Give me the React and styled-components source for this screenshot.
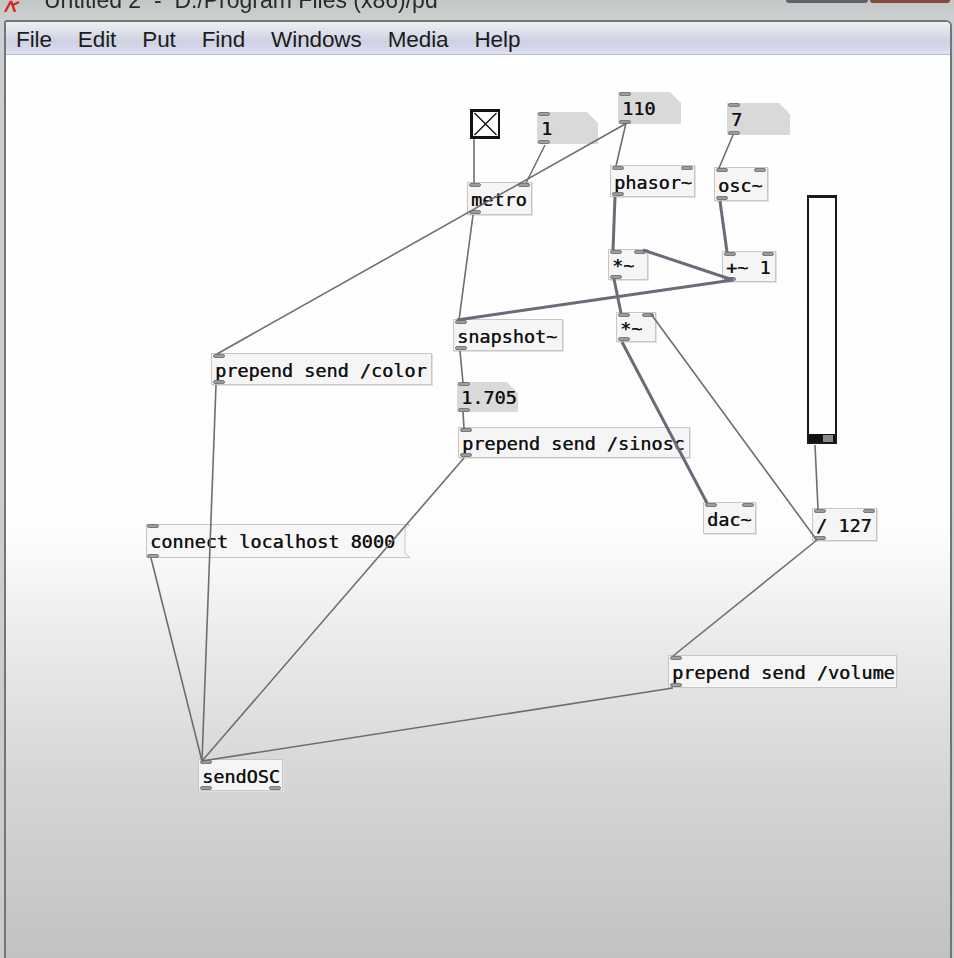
import React from "react";
import styled, { createGlobalStyle, css } from "styled-components";

const CX = 6;
const CY = 56;

const GlobalStyle = createGlobalStyle`
  html, body { margin: 0; padding: 0; background: #c8cbcc; }
  #root { width: 954px; height: 958px; }
`;

const Window = styled.div`
  width: 954px;
  height: 958px;
  background: linear-gradient(to bottom, #c3c6c7, #cdd0d1 20px, #c9cccd);
  display: flex;
  flex-direction: column;
  overflow: hidden;
  position: relative;
`;

const TitleBar = styled.div`
  height: 20px;
  display: flex;
  align-items: flex-start;
  gap: 22px;
  overflow: hidden;
  padding-left: 2px;
  flex: none;
`;

const TitleIcon = styled.svg`
  width: 20px;
  height: 12px;
  flex: none;
`;

const TitleText = styled.div`
  font-family: "Liberation Sans", Arial, sans-serif;
  font-size: 23px;
  line-height: 24px;
  margin-top: -12px;
  color: #2a2a2a;
  white-space: pre;
  filter: blur(0.4px);
`;

const WindowButtons = styled.div`
  position: absolute;
  top: 0;
  right: 4px;
  display: flex;
  gap: 2px;
`;

const WinBtn = styled.div`
  width: ${(p) => p.$w}px;
  height: 3px;
  border-radius: 0 0 4px 4px;
  background: ${(p) => p.$c};
`;

const Frame = styled.div`
  flex: 1;
  margin: 0 2px 0 4px;
  border: 2px solid #737677;
  border-bottom: none;
  border-radius: 3px 6px 0 0;
  display: flex;
  flex-direction: column;
  overflow: hidden;
`;

const MenuBar = styled.div`
  height: 33px;
  box-sizing: border-box;
  padding: 4px 0 0 10px;
  flex: none;
  display: flex;
  align-items: center;
  gap: 26px;
  background: linear-gradient(
    to bottom,
    #eceef3 0%,
    #dfe1ea 30%,
    #cdd1e3 60%,
    #d6d9ea 85%,
    #e2e4f0 100%
  );
  border-bottom: 1px solid #b7bac8;
`;

const MenuItem = styled.span`
  font-family: "Liberation Sans", Arial, sans-serif;
  font-size: 22.5px;
  color: #1c1c1c;
  letter-spacing: -0.1px;
`;

const Canvas = styled.div`
  flex: 1;
  position: relative;
  background: linear-gradient(
    to bottom,
    #ffffff 0%,
    #fdfdfd 53%,
    #ececec 64%,
    #d6d6d6 80%,
    #c2c2c2 100%
  );
  overflow: hidden;
`;

const Wires = styled.svg`
  position: absolute;
  left: 0;
  top: 0;
  width: 944px;
  height: 902px;
  overflow: visible;
  z-index: 2;
  pointer-events: none;
`;

const boxText = css`
  font-family: "DejaVu Sans Mono", monospace;
  font-size: 18.5px;
  font-weight: normal;
  color: #111;
  text-shadow: 0.4px 0 0 #333;
  white-space: pre;
`;

const Placed = styled.div`
  position: absolute;
  left: ${(p) => p.$x - CX}px;
  top: ${(p) => p.$y - CY}px;
  width: ${(p) => p.$w}px;
  height: ${(p) => p.$h}px;
  box-sizing: border-box;
`;

const ObjBox = styled(Placed)`
  ${boxText};
  background: #f5f5f5;
  border: 1px solid #c6c6c6;
  box-shadow: 1px 1px 0 #e2e2e2;
  line-height: ${(p) => p.$h + 1}px;
  padding-left: 3px;
  z-index: 1;
`;

const NumBox = styled(Placed)`
  ${boxText};
  background: #d9d9d9;
  clip-path: polygon(0 0, calc(100% - 11px) 0, 100% 11px, 100% 100%, 0 100%);
  line-height: ${(p) => p.$h + 2}px;
  padding-left: 4px;
  z-index: 1;
`;

const MsgWrap = styled(Placed)`
  ${boxText};
  line-height: ${(p) => p.$h + 2}px;
  padding-left: 4px;
  z-index: 1;
`;

const MsgShape = styled.svg`
  position: absolute;
  left: 0;
  top: 0;
  width: 100%;
  height: 100%;
  z-index: -1;
  overflow: visible;
`;

const Port = styled.div`
  position: absolute;
  width: 12px;
  height: 4px;
  box-sizing: border-box;
  background: #9d9d9d;
  border: 1px solid #7a7a7a;
  border-radius: 2px;
  ${(p) => (p.$top ? "top: 0;" : "bottom: 0;")}
  ${(p) => (p.$right ? "right: 1px;" : "left: 1px;")}
`;

const Toggle = styled(Placed)`
  background: #fff;
  border: 3px solid #111;
  border-right-width: 2px;
  z-index: 1;
`;

const ToggleX = styled.svg`
  display: block;
  width: 100%;
  height: 100%;
`;

const Slider = styled(Placed)`
  background: #fdfdfd;
  border: 2px solid #1a1a1a;
  border-top-width: 3px;
  display: flex;
  flex-direction: column;
  justify-content: flex-end;
  z-index: 1;
`;

const SliderKnob = styled.div`
  height: 7px;
  background: linear-gradient(to right, #111 0 55%, #8a8a8a 55% 92%, #111 92%);
  border-top: 1px solid #111;
`;

const objects = [
  { t: "metro", x: 467, y: 183, w: 65, h: 33, ins: 2, outs: 1 },
  { t: "phasor~", x: 610, y: 166, w: 85, h: 32, ins: 2, outs: 1 },
  { t: "osc~", x: 714, y: 168, w: 54, h: 34, ins: 2, outs: 1 },
  { t: "*~", x: 608, y: 250, w: 40, h: 31, ins: 2, outs: 1 },
  { t: "+~ 1", x: 722, y: 252, w: 54, h: 31, ins: 2, outs: 1 },
  { t: "snapshot~", x: 453, y: 320, w: 110, h: 32, ins: 1, outs: 1 },
  { t: "*~", x: 616, y: 313, w: 40, h: 30, ins: 2, outs: 1 },
  { t: "prepend send /color", x: 211, y: 354, w: 221, h: 32, ins: 1, outs: 1 },
  { t: "prepend send /sinosc", x: 458, y: 428, w: 232, h: 31, ins: 1, outs: 1 },
  { t: "dac~", x: 703, y: 503, w: 53, h: 32, ins: 2, outs: 0 },
  { t: "/ 127", x: 812, y: 509, w: 65, h: 33, ins: 2, outs: 1 },
  { t: "prepend send /volume", x: 668, y: 656, w: 229, h: 33, ins: 1, outs: 1 },
  { t: "sendOSC", x: 198, y: 760, w: 85, h: 32, ins: 1, outs: 2 },
];

const numbers = [
  { t: "1", x: 537, y: 113, w: 61, h: 32 },
  { t: "110", x: 618, y: 93, w: 63, h: 32 },
  { t: "7", x: 727, y: 104, w: 63, h: 32 },
  { t: "1.705", x: 457, y: 383, w: 61, h: 30 },
];

const controlWires = [
  [474, 140, 474, 184],
  [545, 146, 526, 184],
  [627, 124, 217, 355],
  [626, 124, 616, 167],
  [733, 136, 719, 169],
  [473, 216, 459, 321],
  [460, 352, 463, 384],
  [463, 413, 464, 429],
  [816, 540, 651, 315],
  [815, 446, 818, 510],
  [817, 541, 673, 657],
  [464, 459, 202, 762],
  [216, 386, 202, 762],
  [151, 559, 202, 762],
  [673, 689, 202, 762],
];

const signalWires = [
  [615, 198, 613, 251],
  [720, 202, 727, 253],
  [733, 281, 643, 251],
  [733, 281, 457, 321],
  [614, 280, 621, 314],
  [622, 343, 707, 504],
];

function Ports({ ins, outs }) {
  return (
    <>
      {ins >= 1 && <Port $top />}
      {ins >= 2 && <Port $top $right />}
      {outs >= 1 && <Port />}
      {outs >= 2 && <Port $right />}
    </>
  );
}

export default function App() {
  return (
    <>
      <GlobalStyle />
      <Window>
        <TitleBar>
          <TitleIcon viewBox="0 0 20 12">
            <path d="M3 12 L9 1 M9 1 L13 12 M11 5 L17 2" stroke="#d42a1e" strokeWidth="2.4" fill="none" />
          </TitleIcon>
          <TitleText>Untitled 2  -  D:/Program Files (x86)/pd</TitleText>
        </TitleBar>
        <WindowButtons>
          <WinBtn $w={82} $c="#5e6266" />
          <WinBtn $w={80} $c="#8a4636" />
        </WindowButtons>
        <Frame>
          <MenuBar>
            {["File", "Edit", "Put", "Find", "Windows", "Media", "Help"].map((m) => (
              <MenuItem key={m}>{m}</MenuItem>
            ))}
          </MenuBar>
          <Canvas>
            <Toggle $x={470} $y={110} $w={30} $h={30}>
              <ToggleX viewBox="0 0 25 25">
                <path d="M1 1 L24 24 M24 1 L1 24" stroke="#111" strokeWidth="1.4" />
              </ToggleX>
            </Toggle>

            <Slider $x={807} $y={196} $w={30} $h={249}>
              <SliderKnob />
            </Slider>

            {numbers.map((n, i) => (
              <NumBox key={i} $x={n.x} $y={n.y} $w={n.w} $h={n.h}>
                {n.t}
                <Port $top />
                <Port />
              </NumBox>
            ))}

            {objects.map((o, i) => (
              <ObjBox key={i} $x={o.x} $y={o.y} $w={o.w} $h={o.h}>
                {o.t}
                <Ports ins={o.ins} outs={o.outs} />
              </ObjBox>
            ))}

            <MsgWrap $x={146} $y={525} $w={259} $h={34}>
              <MsgShape viewBox="0 0 259 34" preserveAspectRatio="none">
                <polygon
                  points="0.5,0.5 264,0.5 259,5 259,29 264,33.5 0.5,33.5"
                  fill="#f7f7f7"
                  stroke="#c6c6c6"
                  strokeWidth="1"
                />
              </MsgShape>
              connect localhost 8000
              <Port $top />
              <Port />
            </MsgWrap>

            <Wires viewBox={`${CX} ${CY} 944 902`}>
              {controlWires.map(([x1, y1, x2, y2], i) => (
                <line key={"c" + i} x1={x1} y1={y1} x2={x2} y2={y2} stroke="#6e6e6e" strokeWidth="1.6" />
              ))}
              {signalWires.map(([x1, y1, x2, y2], i) => (
                <line key={"s" + i} x1={x1} y1={y1} x2={x2} y2={y2} stroke="#6a6b78" strokeWidth="3" />
              ))}
            </Wires>
          </Canvas>
        </Frame>
      </Window>
    </>
  );
}
